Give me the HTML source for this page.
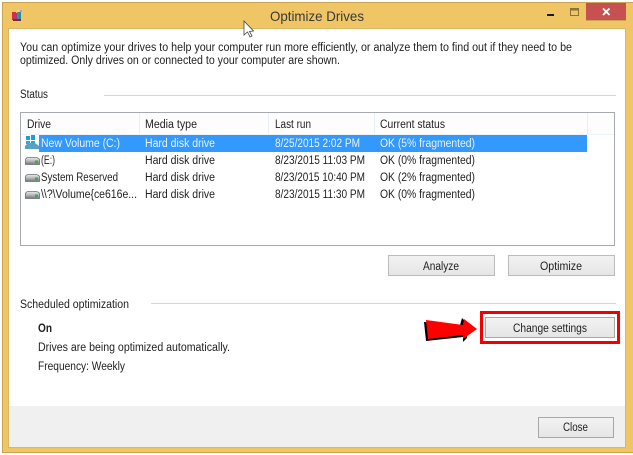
<!DOCTYPE html>
<html><head><meta charset="utf-8"><style>
html,body{margin:0;padding:0;background:#fff;width:633px;height:455px;overflow:hidden}
svg{display:block;filter:blur(0.25px)}
text{font-family:"Liberation Sans",sans-serif;font-size:11.5px;fill:#222}
</style></head><body>
<svg width="633" height="455" viewBox="0 0 633 455" xmlns="http://www.w3.org/2000/svg">
<defs>
<linearGradient id="b" x1="0" y1="0" x2="0" y2="1"><stop offset="0" stop-color="#f2f2f2"/><stop offset="1" stop-color="#e5e5e5"/></linearGradient>
<linearGradient id="d" x1="0" y1="0" x2="0" y2="1"><stop offset="0" stop-color="#eceeee"/><stop offset="0.5" stop-color="#b4b8ba"/><stop offset="1" stop-color="#6f7476"/></linearGradient>
<g id="drive"><path d="M0.500 9.500 V5 Q0.500 3 3 2.500 H11 Q14.500 3 14.500 5 V9.500 Z" fill="url(#d)" stroke="#6a6e70" stroke-width="0.800"/><rect x="10" y="5.500" width="3" height="2.500" fill="#35b044"/></g>
</defs>
<!-- window frame -->
<rect x="2" y="2" width="631" height="451" fill="#c9a550"/>
<rect x="3" y="3" width="630" height="449" fill="#efc566"/>
<rect x="8" y="28" width="618" height="420" fill="#d8b868"/>
<rect x="9" y="29" width="616" height="418" fill="#fff"/>
<rect x="9" y="406" width="616" height="41" fill="#f0f0f0"/>
<!-- app icon -->
<rect x="12" y="12" width="4" height="8" fill="#d03048"/><rect x="15" y="13" width="2" height="7" fill="#b03090"/><rect x="17" y="12" width="2" height="7" fill="#30a060"/><rect x="19" y="12" width="2" height="7" fill="#3080c8"/><rect x="20" y="10" width="2" height="2" fill="#d78ad8"/><rect x="17" y="10" width="2" height="2" fill="#e8d8a0"/>
<rect x="13" y="19" width="8" height="2" fill="#70303a"/>
<!-- title -->
<text x="270" y="21" textLength="94" lengthAdjust="spacingAndGlyphs" style="font-size:14px;fill:#3a3a3a">Optimize Drives</text>
<!-- window buttons -->
<rect x="547" y="14" width="7" height="2" fill="#1a1a1a"/>
<rect x="570.500" y="8.500" width="8" height="7" fill="none" stroke="#8a7238"/><rect x="571" y="9" width="7" height="1.500" fill="#8a7238"/>
<rect x="586" y="3" width="40" height="17" fill="#c75050"/><rect x="586" y="20" width="40" height="1" fill="#c9a550"/>
<path d="M603 8.500 L609.500 15 M609.500 8.500 L603 15" stroke="#fff" stroke-width="1.800"/>
<!-- intro -->
<text x="20" y="51" textLength="552" lengthAdjust="spacingAndGlyphs">You can optimize your drives to help your computer run more efficiently, or analyze them to find out if they need to be</text>
<text x="20" y="64" textLength="320" lengthAdjust="spacingAndGlyphs">optimized. Only drives on or connected to your computer are shown.</text>
<!-- status -->
<text x="20" y="98" textLength="28" lengthAdjust="spacingAndGlyphs">Status</text>
<rect x="104" y="95" width="512" height="1" fill="#d8d8d8"/>
<!-- list -->
<rect x="20.500" y="112.500" width="594" height="133" fill="#fff" stroke="#a6aaaf"/>
<rect x="21" y="113" width="593" height="21" fill="#fdfdfe"/>
<rect x="21" y="134" width="593" height="1" fill="#eef3f8"/>
<g fill="#e8eef4"><rect x="139" y="113" width="1" height="21"/><rect x="268" y="113" width="1" height="21"/><rect x="374" y="113" width="1" height="21"/><rect x="587" y="113" width="1" height="21"/></g>
<text x="27" y="128" textLength="24" lengthAdjust="spacingAndGlyphs">Drive</text>
<text x="145" y="128" textLength="52" lengthAdjust="spacingAndGlyphs">Media type</text>
<text x="275" y="128" textLength="36" lengthAdjust="spacingAndGlyphs">Last run</text>
<text x="380" y="128" textLength="65" lengthAdjust="spacingAndGlyphs">Current status</text>
<rect x="39" y="135" width="548" height="17" fill="#3399ff"/>
<!-- row icons -->
<g><rect x="26" y="136" width="4" height="4" fill="#19a0dc"/><rect x="31" y="135" width="4" height="5" fill="#19a0dc"/><rect x="26" y="141" width="4" height="3" fill="#23a8e0"/><rect x="31" y="141" width="4" height="3" fill="#23a8e0"/><path d="M25 149 V146 L28 143 H35 L39 146 V149 Z" fill="#5aa0c0"/></g>
<use href="#drive" x="25" y="155"/><use href="#drive" x="25" y="172"/><use href="#drive" x="25" y="189"/>
<!-- rows -->
<text x="41" y="147" textLength="79" lengthAdjust="spacingAndGlyphs" style="fill:#e8f3ff">New Volume (C:)</text>
<text x="145" y="147" textLength="70" lengthAdjust="spacingAndGlyphs" style="fill:#e8f3ff">Hard disk drive</text>
<text x="275" y="147" textLength="85" lengthAdjust="spacingAndGlyphs" style="fill:#e8f3ff">8/25/2015 2:02 PM</text>
<text x="380" y="147" textLength="95" lengthAdjust="spacingAndGlyphs" style="fill:#e8f3ff">OK (5% fragmented)</text>
<text x="41" y="164" textLength="14" lengthAdjust="spacingAndGlyphs">(E:)</text>
<text x="145" y="164" textLength="70" lengthAdjust="spacingAndGlyphs">Hard disk drive</text>
<text x="275" y="164" textLength="90" lengthAdjust="spacingAndGlyphs">8/23/2015 11:03 PM</text>
<text x="380" y="164" textLength="95" lengthAdjust="spacingAndGlyphs">OK (0% fragmented)</text>
<text x="41" y="181" textLength="77" lengthAdjust="spacingAndGlyphs">System Reserved</text>
<text x="145" y="181" textLength="70" lengthAdjust="spacingAndGlyphs">Hard disk drive</text>
<text x="275" y="181" textLength="90" lengthAdjust="spacingAndGlyphs">8/23/2015 10:40 PM</text>
<text x="380" y="181" textLength="95" lengthAdjust="spacingAndGlyphs">OK (2% fragmented)</text>
<text x="41" y="198" textLength="96" lengthAdjust="spacingAndGlyphs">\\?\Volume{ce616e...</text>
<text x="145" y="198" textLength="70" lengthAdjust="spacingAndGlyphs">Hard disk drive</text>
<text x="275" y="198" textLength="90" lengthAdjust="spacingAndGlyphs">8/23/2015 11:30 PM</text>
<text x="380" y="198" textLength="95" lengthAdjust="spacingAndGlyphs">OK (0% fragmented)</text>
<!-- buttons -->
<rect x="388.500" y="255.500" width="106" height="20" fill="url(#b)" stroke="#bcbcbc"/>
<text x="423" y="270" textLength="36" lengthAdjust="spacingAndGlyphs">Analyze</text>
<rect x="508.500" y="255.500" width="106" height="20" fill="url(#b)" stroke="#bcbcbc"/>
<text x="540" y="270" textLength="42" lengthAdjust="spacingAndGlyphs">Optimize</text>
<!-- scheduled -->
<text x="20" y="308" textLength="109" lengthAdjust="spacingAndGlyphs">Scheduled optimization</text>
<rect x="151" y="303" width="465" height="1" fill="#d8d8d8"/>
<text x="38" y="332" textLength="14" lengthAdjust="spacingAndGlyphs" style="font-weight:bold">On</text>
<text x="38" y="351" textLength="192" lengthAdjust="spacingAndGlyphs">Drives are being optimized automatically.</text>
<text x="38" y="370" textLength="87" lengthAdjust="spacingAndGlyphs">Frequency: Weekly</text>
<!-- change settings -->
<rect x="485.500" y="317.500" width="129" height="20" fill="url(#b)" stroke="#a8a8a8"/>
<text x="513" y="332" textLength="74" lengthAdjust="spacingAndGlyphs">Change settings</text>
<rect x="481.500" y="312.500" width="137" height="30" fill="none" stroke="#f00000" stroke-width="3"/>
<!-- arrow -->
<path d="M424 322 L426 341 L463 337 L463 342 L467 338 L466 322 L462 318 L460 325 Z" fill="#000"/>
<path d="M426 320 L428 339 L463 335 L463 339 L477 329 L464 319 L463 325 Z" fill="#f00"/>
<!-- close -->
<rect x="538.500" y="417.500" width="75" height="20" fill="url(#b)" stroke="#a8a8a8"/>
<text x="563" y="431" textLength="25" lengthAdjust="spacingAndGlyphs">Close</text>
<!-- cursor -->
<path d="M244 21 L244 35 L247.500 32 L250 37 L252 36 L249.500 31.500 L253.500 31 Z" fill="#fff" stroke="#444" stroke-width="0.800"/>
</svg>
</body></html>
